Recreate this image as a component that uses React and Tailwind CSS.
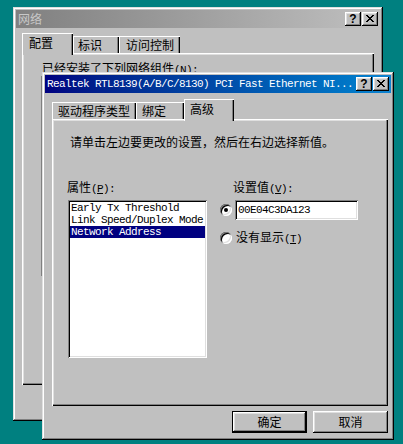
import React from "react";

const raised =
  "shadow-[inset_-1px_-1px_#000000,inset_1px_1px_#dfdfdf,inset_-2px_-2px_#808080,inset_2px_2px_#ffffff]";
const btnRaised =
  "shadow-[inset_-1px_-1px_#000000,inset_1px_1px_#ffffff,inset_-2px_-2px_#808080,inset_2px_2px_#dfdfdf]";
const sunken =
  "shadow-[inset_1px_1px_#808080,inset_-1px_-1px_#ffffff,inset_2px_2px_#000000,inset_-2px_-2px_#dfdfdf]";
const panel =
  "shadow-[inset_1px_1px_#ffffff,inset_-1px_-1px_#000000,inset_-2px_-2px_#808080,inset_2px_2px_#dfdfdf]";
const tabShadow =
  "shadow-[inset_1px_1px_#ffffff,inset_-1px_0_#000000,inset_-2px_0_#808080]";

function M({ children, className = "" }) {
  return (
    <span className={"font-['Liberation_Mono',monospace] text-[11px] tracking-[-0.6px] " + className}>
      {children}
    </span>
  );
}

function CloseGlyph() {
  const px = [
    [0, 0], [1, 0], [6, 0], [7, 0],
    [1, 1], [2, 1], [5, 1], [6, 1],
    [2, 2], [3, 2], [4, 2], [5, 2],
    [3, 3], [4, 3],
    [2, 4], [3, 4], [4, 4], [5, 4],
    [1, 5], [2, 5], [5, 5], [6, 5],
    [0, 6], [1, 6], [6, 6], [7, 6],
  ];
  return (
    <svg width="8" height="7" viewBox="0 0 8 7" shapeRendering="crispEdges">
      {px.map(([x, y], i) => (
        <rect key={i} x={x} y={y} width="1" height="1" fill="#000" />
      ))}
    </svg>
  );
}

function TitleButtons() {
  return (
    <div className="ml-auto flex">
      <div className={"w-[16px] h-[14px] bg-[#c0c0c0] flex items-center justify-center " + btnRaised}>
        <span className="font-['Liberation_Sans',sans-serif] font-bold text-[12px] leading-[12px] text-black -mt-[1px]">?</span>
      </div>
      <div className={"ml-[1px] w-[16px] h-[14px] bg-[#c0c0c0] flex items-center justify-center " + btnRaised}>
        <div className="-mt-[1px] -ml-[1px]">
          <CloseGlyph />
        </div>
      </div>
    </div>
  );
}

function Tab({ w, pl, selected, children }) {
  return (
    <div
      className={
        "bg-[#c0c0c0] flex items-center " +
        tabShadow +
        (selected ? " relative z-10 h-[22px] -mb-[2px] pb-[2px]" : " h-[17px]")
      }
      style={{ width: w, paddingLeft: pl }}
    >
      <span className="leading-[12px]">{children}</span>
    </div>
  );
}

function Radio({ checked }) {
  return (
    <div className={"relative w-[12px] h-[12px] rounded-full bg-white flex items-center justify-center " + sunken}>
      {checked && <div className="w-[4px] h-[4px] rounded-full bg-black" />}
    </div>
  );
}

export default function App() {
  return (
    <div className="relative w-[403px] h-[444px] overflow-hidden bg-[#008080] font-['Noto_Sans_CJK_SC',sans-serif] text-[12px] leading-[12px] text-black">
      {/* Back window */}
      <div className={"absolute left-[13px] top-[7px] w-[370px] h-[414px] bg-[#c0c0c0] p-[3px] flex flex-col " + raised}>
        <div className="h-[18px] flex items-center bg-linear-to-r from-[#808080] to-[#c0c0c0] pl-[2px] pr-[2px]">
          <span className="text-[#c8c8c8]">网络</span>
          <TitleButtons />
        </div>
        <div className="mt-[5px] ml-[6px] h-[20px] flex items-end">
          <Tab w={51} pl={7} selected>配置</Tab>
          <Tab w={46} pl={5}>标识</Tab>
          <Tab w={61} pl={7}>访问控制</Tab>
        </div>
        <div className={"ml-[6px] w-[352px] h-[332px] bg-[#c0c0c0] flex flex-col " + panel}>
          <div className="pt-[9px] pl-[20px]">
            已经安装了下列网络组件<M>(<span className="underline">N</span>):</M>
          </div>
          <div className={"mt-[0px] ml-[19px] w-[316px] h-[200px] bg-white " + sunken} />
        </div>
      </div>

      {/* Front window */}
      <div className={"absolute left-[42px] top-[72px] w-[352px] h-[368px] bg-[#c0c0c0] p-[3px] flex flex-col " + raised}>
        <div className="h-[18px] flex items-center bg-linear-to-r from-[#000080] to-[#1084d0] pl-[2px] pr-[2px]">
          <span className="font-['Liberation_Mono',monospace] text-[11px] leading-[12px] tracking-[-0.6px] text-white whitespace-nowrap">
            Realtek RTL8139(A/B/C/8130) PCI Fast Ethernet NI...
          </span>
          <TitleButtons />
        </div>
        <div className="mt-[7px] ml-[7px] h-[19px] flex items-end">
          <Tab w={84} pl={6}>驱动程序类型</Tab>
          <Tab w={48} pl={6}>绑定</Tab>
          <Tab w={50} pl={6} selected>高级</Tab>
        </div>
        <div className={"ml-[7px] w-[336px] h-[287px] bg-[#c0c0c0] flex flex-col " + panel}>
          <div className="pt-[17px] pl-[18px]">请单击左边要更改的设置，然后在右边选择新值。</div>
          <div className="mt-[33px] pl-[15px] flex">
            <div className="flex flex-col w-[140px]">
              <div>
                属性<M>(<span className="underline">P</span>):</M>
              </div>
              <div className={"mt-[5px] ml-[1px] w-[139px] h-[158px] bg-white p-[2px] flex flex-col " + sunken}>
                <div className="h-[12px] pl-[1px] flex items-center"><M className="leading-[12px]">Early Tx Threshold</M></div>
                <div className="h-[12px] pl-[1px] flex items-center"><M className="leading-[12px]">Link Speed/Duplex Mode</M></div>
                <div className="h-[12px] pl-[1px] flex items-center bg-[#000080] text-white"><M className="leading-[12px]">Network Address</M></div>
              </div>
            </div>
            <div className="ml-[13px] flex flex-col">
              <div className="pl-[13px]">
                设置值<M>(<span className="underline">V</span>):</M>
              </div>
              <div className="mt-[5px] h-[20px] flex items-center">
                <Radio checked />
                <div className={"ml-[3px] w-[123px] h-[20px] bg-white pl-[3px] flex items-center " + sunken}>
                  <M className="leading-[12px]">00E04C3DA123</M>
                </div>
              </div>
              <div className="mt-[8px] h-[20px] flex items-center">
                <Radio />
                <span className="ml-[4px]">
                  没有显示<M>(<span className="underline">T</span>)</M>
                </span>
              </div>
            </div>
          </div>
        </div>
        <div className="mt-[5px] ml-[7px] w-[336px] flex justify-end gap-[6px]">
          <div className="w-[75px] h-[22px] border border-black bg-[#c0c0c0]">
            <div className={"w-full h-full flex items-center justify-center " + btnRaised}>确定</div>
          </div>
          <div className={"w-[75px] h-[22px] bg-[#c0c0c0] flex items-center justify-center " + btnRaised}>取消</div>
        </div>
      </div>
    </div>
  );
}
